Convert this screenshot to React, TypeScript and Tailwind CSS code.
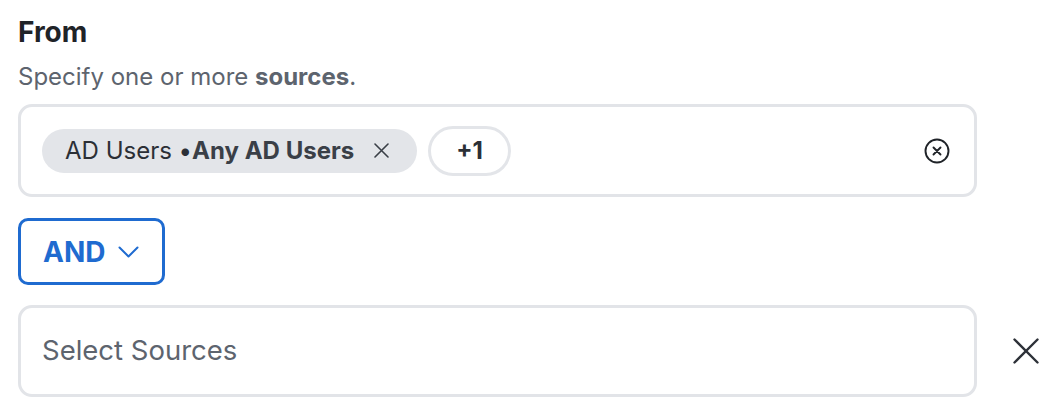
import React from "react";

export default function App() {
  return (
    <div className="w-[1060px] h-[418px] bg-white pl-[18px] pt-[15px] font-['Inter','Noto_Sans',sans-serif] overflow-hidden">
      <div className="text-[28px] font-bold leading-[34px] text-[#1f2328]">From</div>
      <div className="mt-[12px] text-[24px] leading-[32px] text-[#5d646e]">
        Specify one or more <span className="font-bold">sources</span>.
      </div>

      <div className="mt-[11px] w-[959px] h-[93px] border-[3px] border-[#e2e4e8] rounded-[14px] flex items-center pl-[21px] pr-[24px]">
        <div className="h-[44px] rounded-full bg-[#e3e5e9] flex items-center pl-[23px] pr-[28px] text-[24px] text-[#2b2f36]">
          <span>AD Users •</span>
          <span className="font-bold text-[#3a3f47]">Any AD Users</span>
          <svg className="ml-[20px]" width="15" height="15" viewBox="0 0 15 15" fill="none" stroke="#3a3f47" strokeWidth="1.6" strokeLinecap="round">
            <path d="M1 1L14 14M14 1L1 14" />
          </svg>
        </div>
        <div className="ml-[11px] h-[50px] px-[25px] rounded-full border-[3px] border-[#e3e5e9] flex items-center text-[24px] font-bold text-[#2b2f36]">
          +1
        </div>
        <svg className="ml-auto" width="26" height="26" viewBox="0 0 26 26" fill="none" stroke="#1f2328" strokeWidth="1.9" strokeLinecap="round">
          <circle cx="13" cy="13" r="11.5" />
          <path d="M9.5 9.5L16.5 16.5M16.5 9.5L9.5 16.5" />
        </svg>
      </div>

      <div className="mt-[21px] w-[147px] h-[67px] border-[3px] border-[#1f6bd0] rounded-[10px] flex items-center pl-[22px]">
        <span className="text-[28px] font-bold text-[#1f6bd0] leading-none">AND</span>
        <svg className="ml-[13px]" width="21" height="12" viewBox="0 0 21 12" fill="none" stroke="#1f6bd0" strokeWidth="2" strokeLinecap="round" strokeLinejoin="round">
          <path d="M1.5 1.5L10.5 10.5L19.5 1.5" />
        </svg>
      </div>

      <div className="mt-[20px] flex items-center">
        <div className="w-[959px] h-[92px] border-[3px] border-[#e2e4e8] rounded-[14px] flex items-center pl-[21px] text-[27.5px] text-[#5d646e]">
          Select Sources
        </div>
        <svg className="ml-[36px]" width="26" height="26" viewBox="0 0 26 26" fill="none" stroke="#2d3138" strokeWidth="2.4" strokeLinecap="round">
          <path d="M1.5 1.5L24.5 24.5M24.5 1.5L1.5 24.5" />
        </svg>
      </div>
    </div>
  );
}
